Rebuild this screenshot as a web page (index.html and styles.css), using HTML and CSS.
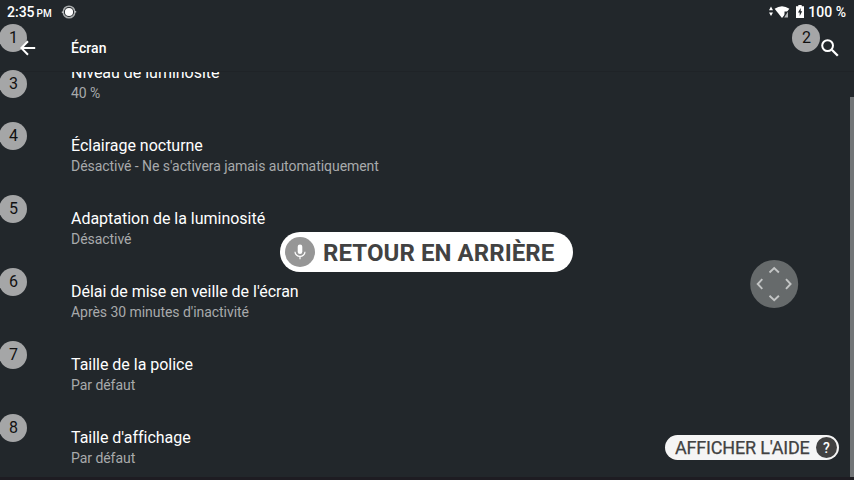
FILE: index.html
```html
<!DOCTYPE html>
<html lang="fr">
<head>
<meta charset="utf-8">
<title>Écran</title>
<link rel="stylesheet" href="styles.css">
</head>
<body>
<div class="screen">
  <header class="status">
    <span class="time">2:35<small>PM</small></span>
    <svg class="eye" width="16" height="14" viewBox="0 0 16 14"><circle cx="8" cy="7" r="5.8" fill="none" stroke="#a9acad" stroke-width="1.5"/><path d="M.8 7.2h2M13.2 6.8h2" stroke="#b9bcbd" stroke-width="1.4"/><circle cx="8" cy="7" r="4.1" fill="#fff"/></svg>
    <div class="indicators">
      <svg width="24" height="16" viewBox="0 0 24 16"><path d="M1 6.2 3 2.6 5 6.2zM1 8.4 3 12 5 8.4z" fill="#fff"/><path d="M6.6 4.8Q14-.5 21.4 4.8L14 14z" fill="#fff"/><path d="M16.5 7.5h5v8h-5z" fill="#22272b"/><path d="M16.2 13.5 20 7.5v6z" fill="#b5b8ba"/></svg>
      <svg class="battery" width="8" height="13" viewBox="0 0 8 13"><path d="M2.3 0h3.4v1.3H8V13H0V1.3h2.3z" fill="#fff"/><path d="M4.7 3 2 7.5h1.7V11L6.2 6.3H4.7z" fill="#22272b"/></svg>
      <span>100 %</span>
    </div>
  </header>
  <nav class="toolbar">
    <svg class="back" width="16" height="16" viewBox="0 0 16 16"><path d="M15.2 8H1.5M8 1.2 1.3 8 8 14.8" fill="none" stroke="#fff" stroke-width="2"/></svg>
    <h1>Écran</h1>
    <svg class="search" width="18" height="18" viewBox="0 0 18 18"><circle cx="6.6" cy="6.6" r="5.4" fill="none" stroke="#fff" stroke-width="2"/><path d="m10.8 10.8 6 6" stroke="#fff" stroke-width="2.3"/></svg>
    <b class="badge first">1</b><b class="badge second">2</b>
  </nav>
  <main class="list">
    <section><h2>Niveau de luminosité</h2><p>40 %</p></section>
    <section><b class="badge">4</b><h2>Éclairage nocturne</h2><p>Désactivé - Ne s'activera jamais automatiquement</p></section>
    <section><b class="badge">5</b><h2>Adaptation de la luminosité</h2><p>Désactivé</p></section>
    <section><b class="badge">6</b><h2>Délai de mise en veille de l'écran</h2><p>Après 30 minutes d'inactivité</p></section>
    <section><b class="badge">7</b><h2>Taille de la police</h2><p>Par défaut</p></section>
    <section><b class="badge">8</b><h2>Taille d'affichage</h2><p>Par défaut</p></section>
  </main>
  <b class="badge third">3</b>
  <i class="scrollbar"></i>
  <div class="toast">
    <span class="mic"><svg width="12" height="16" viewBox="0 0 12 16"><rect x="3.7" y="0.5" width="4.6" height="9.5" rx="2.3" fill="#fff"/><path d="M1 7.7a5 4.6 0 0 0 10 0M6 12.3v3" fill="none" stroke="#fff" stroke-width="1.2"/></svg></span>
    <span class="command">RETOUR EN ARRIÈRE</span>
  </div>
  <svg class="dpad" width="49" height="48" viewBox="0 0 49 48"><circle cx="24.2" cy="24" r="24" fill="#666a6b"/><path d="m19.5 12.5 4.7-4.5 4.7 4.5M19.5 35.8l4.7 4.5 4.7-4.5M12.3 19.2 7.7 24l4.6 4.8M36 19.2l4.6 4.8-4.6 4.8" fill="none" stroke="#c3c5c5" stroke-width="1.9"/></svg>
  <div class="help"><span class="label">AFFICHER L'AIDE</span><span class="question">?</span></div>
</div>
</body>
</html>
```
FILE: styles.css
```css
* { box-sizing: border-box; }
body { margin: 0; font-family: Roboto, sans-serif; background: #22272b; color: #fff; }
h1, h2, p { margin: 0; font-weight: 400; white-space: nowrap; }
svg { display: block; }
.screen { position: relative; width: 854px; height: 480px; overflow: hidden; display: flex; flex-direction: column; border-bottom: 3px solid #1e1c22; }
.status { height: 24px; flex: none; display: flex; align-items: center; padding: 0 8px 0 7px; font-size: 14px; font-weight: 500; }
.time small { font-size: 10px; margin-left: 2px; }
.eye { margin-left: 9px; }
.indicators { margin-left: auto; display: flex; align-items: center; }
.battery { margin: 0 4px 2px 4px; }
.toolbar { position: relative; height: 48px; flex: none; display: flex; align-items: center; padding: 0 15px 0 20px; border-bottom: 1px solid #1f2327; }
.toolbar h1 { margin-left: 35px; font-size: 14px; font-weight: 500; letter-spacing: .1px; }
.search { margin-left: auto; }
.badge { position: absolute; left: -1px; top: 0; width: 28px; height: 28px; border-radius: 50%; background: #a5a6a7; color: #111; font-size: 16px; font-weight: 400; line-height: 27px; text-align: center; padding-left: 1px; }
.badge.first { z-index: -1; }
.badge.second { left: 792px; }
.badge.third { top: 70px; }
.list { flex: 1; min-height: 0; overflow: hidden; display: flex; flex-direction: column; }
.list section { position: relative; height: 73px; flex: none; padding: 14px 0 0 71px; }
.list section:first-child { margin-top: -23px; }
.list h2 { font-size: 16px; line-height: 20px; letter-spacing: -.02px; }
.list p { font-size: 14px; line-height: 20px; letter-spacing: -.05px; color: #a8aaab; }
.scrollbar { position: absolute; right: 0; top: 97px; width: 4px; height: 380px; background: #727577; }
.toast { position: absolute; left: 280px; top: 232px; width: 293px; height: 40px; border-radius: 20px; background: #fff; color: #424242; display: flex; align-items: center; padding-left: 5px; }
.mic { width: 30px; height: 30px; border-radius: 50%; background: #969696; display: grid; place-items: center; }
.command { margin: 2px 0 0 8px; font-size: 24px; font-weight: 700; letter-spacing: .08px; white-space: nowrap; }
.dpad { position: absolute; left: 750px; top: 260px; }
.help { position: absolute; left: 665px; top: 435px; width: 174px; height: 25px; border-radius: 13px; background: #f5f5f5; color: #424242; display: flex; align-items: center; justify-content: space-between; padding: 0 2px 0 10px; font-size: 18px; white-space: nowrap; }
.label { letter-spacing: -.18px; -webkit-text-stroke: .25px #424242; }
.question { width: 21px; height: 21px; border-radius: 50%; background: #424242; color: #fff; font-size: 14px; font-weight: 500; line-height: 22px; text-align: center; }
```
